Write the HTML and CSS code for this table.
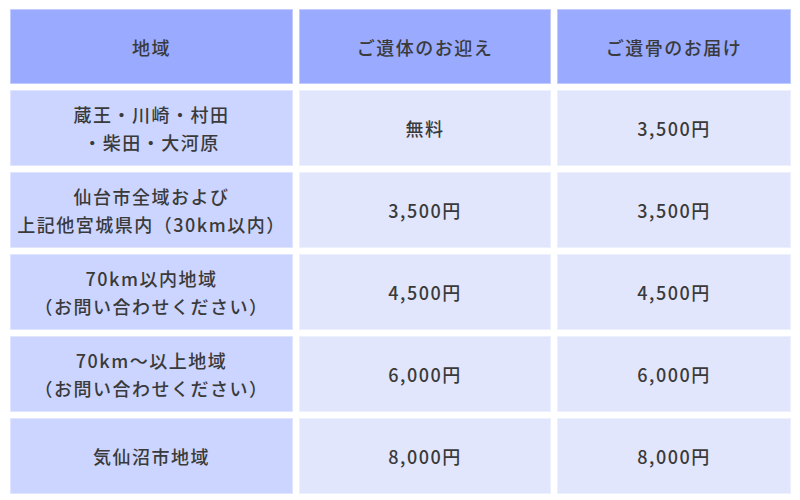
FILE: index.html
```html
<!DOCTYPE html>
<html lang="ja">
<head>
<meta charset="utf-8">
<title>料金表</title>
<link rel="stylesheet" href="styles.css">
</head>
<body>
<div class="price-table">
  <div class="cell head">地域</div>
  <div class="cell head">ご遺体のお迎え</div>
  <div class="cell head">ご遺骨のお届け</div>

  <div class="cell area">蔵王・川崎・村田<br>・柴田・大河原</div>
  <div class="cell">無料</div>
  <div class="cell">3,500円</div>

  <div class="cell area">仙台市全域および<br>上記他宮城県内（30km以内）</div>
  <div class="cell">3,500円</div>
  <div class="cell">3,500円</div>

  <div class="cell area">70km以内地域<br>（お問い合わせください）</div>
  <div class="cell">4,500円</div>
  <div class="cell">4,500円</div>

  <div class="cell area">70km〜以上地域<br>（お問い合わせください）</div>
  <div class="cell">6,000円</div>
  <div class="cell">6,000円</div>

  <div class="cell area">気仙沼市地域</div>
  <div class="cell">8,000円</div>
  <div class="cell">8,000円</div>
</div>
</body>
</html>
```
FILE: styles.css
```css
html, body {
  margin: 0;
  padding: 0;
  background: #ffffff;
}
body {
  font-family: "Noto Sans CJK JP", "Noto Sans", sans-serif;
  color: #3a3a3a;
}
.price-table {
  display: grid;
  grid-template-columns: 283px 252px 234px;
  grid-template-rows: 75px repeat(5, 76px);
  column-gap: 6px;
  row-gap: 6px;
  padding: 9px 0 0 10px;
}
.cell {
  box-sizing: border-box;
  display: flex;
  align-items: center;
  justify-content: center;
  text-align: center;
  font-size: 18px;
  font-weight: 500;
  line-height: 28px;
  letter-spacing: 1.5px;
  background: #e2e6fd;
  border: 1px solid rgba(255, 255, 255, 0.4);
}
.cell.head {
  background: #99aaff;
}
.cell.area {
  background: #ccd5ff;
}
```
